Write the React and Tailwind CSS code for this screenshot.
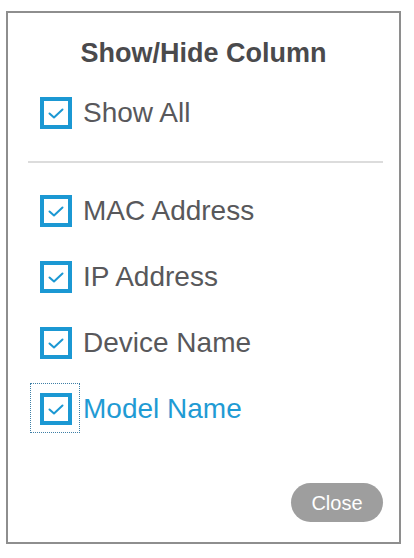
import { useState } from 'react';

const columns = ['MAC Address', 'IP Address', 'Device Name', 'Model Name'];

function CheckBox({ checked }) {
  return (
    <span className="w-[32px] h-[32px] border-4 border-[#1b98d3] flex items-center justify-center shrink-0 bg-white">
      {checked && (
        <svg width="24" height="24" viewBox="0 0 24 24" fill="none">
          <polyline
            points="5.5,12.5 10,16.5 18.5,8.5"
            stroke="#1b98d3"
            strokeWidth="2"
            strokeLinecap="round"
            strokeLinejoin="round"
          />
        </svg>
      )}
    </span>
  );
}

export default function App() {
  const [shown, setShown] = useState(columns.map(() => true));
  const focused = 3;

  return (
    <div className="w-[414px] h-[558px] bg-white pt-[11px] pl-[6px] font-['Liberation_Sans',Arial,sans-serif]">
      <div className="w-[395px] h-[533px] border-2 border-[#8e8e8e] flex flex-col">
        {/* Title */}
        <h2 className="mt-[24px] text-center text-[27px] leading-[32px] font-bold text-[#4a4a4c]">
          Show/Hide Column
        </h2>

        {/* Show all */}
        <label className="mt-[28px] ml-[32px] flex items-center gap-[11px] h-[32px]">
          <CheckBox checked={shown.every(Boolean)} />
          <span className="text-[28px] leading-[32px] text-[#58585b]">Show All</span>
        </label>

        <div className="mt-[32px] ml-[20px] mr-[16px] h-[2px] bg-[#dcdcdc]" />

        {/* Column list */}
        <div className="mt-[32px] ml-[32px] flex flex-col gap-[34px]">
          {columns.map((col, i) => (
            <label
              key={col}
              className="flex items-center gap-[11px] h-[32px]"
              onClick={() => setShown(shown.map((v, j) => (j === i ? !v : v)))}
            >
              <span className="relative">
                <CheckBox checked={shown[i]} />
                {i === focused && (
                  <span className="absolute -left-[10px] -top-[10px] w-[50px] h-[50px] border border-dotted border-[#3f7fa6]" />
                )}
              </span>
              <span
                className={
                  i === focused
                    ? 'text-[28px] leading-[32px] text-[#1f9bd4]'
                    : 'text-[28px] leading-[32px] text-[#58585b]'
                }
              >
                {col}
              </span>
            </label>
          ))}
        </div>

        <button className="mt-auto mb-[20px] mr-[16px] self-end w-[92px] h-[39px] rounded-full bg-[#9e9e9e] text-white text-[20px] leading-none">
          Close
        </button>
      </div>
    </div>
  );
}
